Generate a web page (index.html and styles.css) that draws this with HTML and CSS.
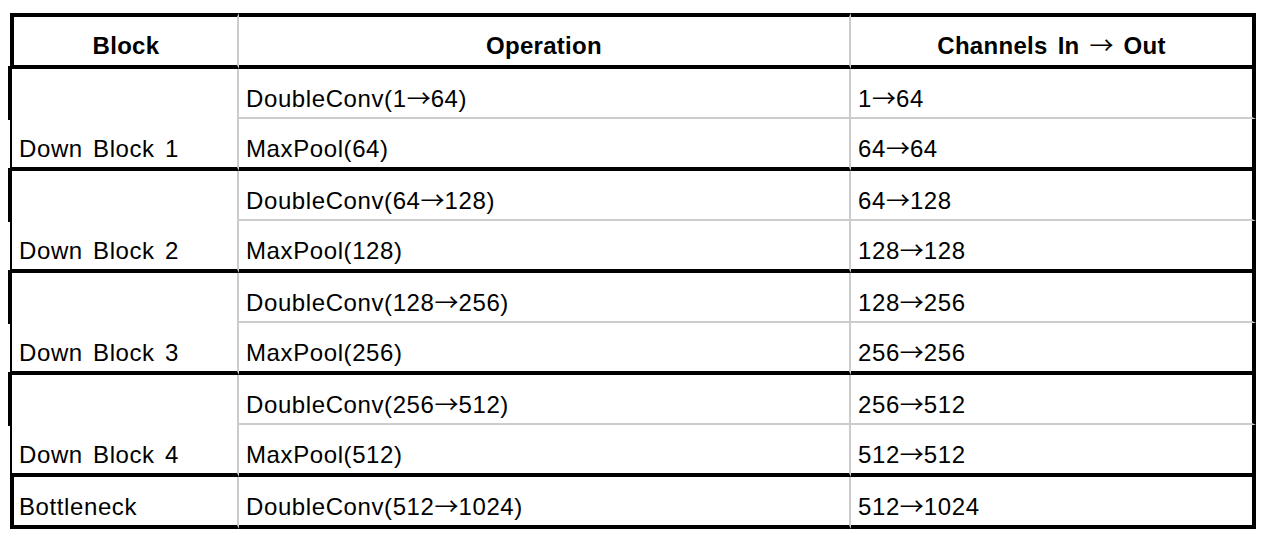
FILE: index.html
```html
<!DOCTYPE html>
<html lang="en">
<head>
    <meta charset="UTF-8">
    <meta name="viewport" content="width=device-width, initial-scale=1.0">
    <title>U-Net Encoder Blocks</title>
    <link rel="stylesheet" href="styles.css">
</head>
<body>

    <table class="arch-table">
        <colgroup>
            <col class="col-block">
            <col class="col-op">
            <col class="col-ch">
        </colgroup>
        <thead>
            <tr>
                <th>Block</th>
                <th>Operation</th>
                <th>Channels In <span class="arr">&rarr;</span> Out</th>
            </tr>
        </thead>
        <tbody>
            <!-- Down block 1 -->
            <tr class="sub-top">
                <td class="block-name" rowspan="2">Down Block 1</td>
                <td>DoubleConv(1<span class="arr">&rarr;</span>64)</td>
                <td>1<span class="arr">&rarr;</span>64</td>
            </tr>
            <tr class="sub-bottom">
                <td>MaxPool(64)</td>
                <td>64<span class="arr">&rarr;</span>64</td>
            </tr>

            <!-- Down block 2 -->
            <tr class="sub-top">
                <td class="block-name" rowspan="2">Down Block 2</td>
                <td>DoubleConv(64<span class="arr">&rarr;</span>128)</td>
                <td>64<span class="arr">&rarr;</span>128</td>
            </tr>
            <tr class="sub-bottom">
                <td>MaxPool(128)</td>
                <td>128<span class="arr">&rarr;</span>128</td>
            </tr>

            <!-- Down block 3 -->
            <tr class="sub-top">
                <td class="block-name" rowspan="2">Down Block 3</td>
                <td>DoubleConv(128<span class="arr">&rarr;</span>256)</td>
                <td>128<span class="arr">&rarr;</span>256</td>
            </tr>
            <tr class="sub-bottom">
                <td>MaxPool(256)</td>
                <td>256<span class="arr">&rarr;</span>256</td>
            </tr>

            <!-- Down block 4 -->
            <tr class="sub-top">
                <td class="block-name" rowspan="2">Down Block 4</td>
                <td>DoubleConv(256<span class="arr">&rarr;</span>512)</td>
                <td>256<span class="arr">&rarr;</span>512</td>
            </tr>
            <tr class="sub-bottom">
                <td>MaxPool(512)</td>
                <td>512<span class="arr">&rarr;</span>512</td>
            </tr>

            <!-- Bottleneck -->
            <tr class="single">
                <td class="first">Bottleneck</td>
                <td>DoubleConv(512<span class="arr">&rarr;</span>1024)</td>
                <td>512<span class="arr">&rarr;</span>1024</td>
            </tr>
        </tbody>
    </table>

</body>
</html>
```

FILE: styles.css
```css
body {
    margin: 0;
    background: #ffffff;
    font-family: "Liberation Sans", Arial, sans-serif;
    color: #000000;
}

/* Table frame */
.arch-table {
    margin: 13px 0 0 10px;
    width: 1246px;
    table-layout: fixed;
    border-collapse: separate;
    border-spacing: 0;
}

.col-block { width: 229px; }
.col-op    { width: 612px; }
.col-ch    { width: 405px; }

.arch-table th,
.arch-table td {
    font-size: 24px;
    line-height: 28px;
    letter-spacing: 0.6px;
    word-spacing: 3px;
    text-align: left;
    vertical-align: bottom;
    padding: 16px 7px 4px 7px;
    border-right: 2px solid #cccccc;
    white-space: nowrap;
}

/* Header */
.arch-table th {
    font-weight: 700;
    text-align: center;
    letter-spacing: 0.3px;
    word-spacing: 3px;
    padding: 15px 4px 5px 4px;
    border-top: 4px solid #000000;
    border-bottom: 4px solid #000000;
}

.arch-table th:first-child,
.arch-table td.first {
    border-left: 4px solid #000000;
    padding-left: 5px;
}

.arch-table th:last-child,
.arch-table td:last-child {
    border-right: 4px solid #000000;
}

/* long thin arrow, as in the source document */
.arr {
    font-family: "Noto Sans CJK JP", "DejaVu Sans", sans-serif;
    font-weight: 400;
    letter-spacing: 0;
    line-height: 1;
}

/* Rows inside a block */
.sub-top td {
    border-bottom: 2px solid #cccccc;
}

.sub-bottom td,
.single td,
.arch-table td.block-name {
    border-bottom: 4px solid #000000;
}

.block-name {
    position: relative;
    border-left: 2px solid #000000;
}

/* the thicker stub on the upper half of each block's left edge */
.block-name::before {
    content: "";
    position: absolute;
    left: -4px;
    top: -3px;
    width: 4px;
    height: 54px;
    background: #000000;
}
```
